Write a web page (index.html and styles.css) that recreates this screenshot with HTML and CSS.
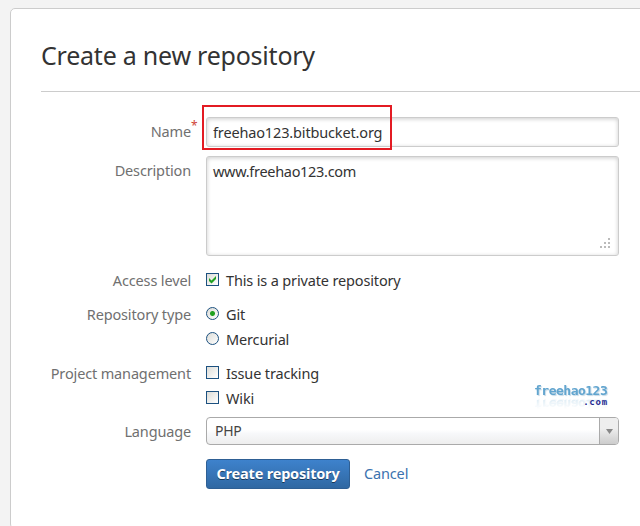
FILE: index.html
```html
<!DOCTYPE html>
<html lang="en">
<head>
<meta charset="utf-8">
<title>Create a new repository</title>
<link rel="stylesheet" href="styles.css">
</head>
<body>
<main class="card">
  <h1 class="title"><span>Create a new repository</span></h1>
  <form class="form">
    <div class="row row-name">
      <label class="label" for="name">Name<span class="required">*</span></label>
      <div class="field name-field"><input class="text-input" id="name" type="text" value="freehao123.bitbucket.org"><span class="highlight"></span></div>
    </div>
    <div class="row row-description">
      <label class="label" for="desc">Description</label>
      <div class="field area-field">
        <textarea class="text-area" id="desc">www.freehao123.com</textarea>
        <svg class="grip" width="10" height="10" viewBox="0 0 10 10" fill="#bbb" shape-rendering="crispEdges"><path d="M8 0h2v2h-2zM4 4h2v2h-2zM8 4h2v2h-2zM0 8h2v2h-2zM4 8h2v2h-2zM8 8h2v2h-2z"/></svg>
      </div>
    </div>
    <div class="row row-options">
      <span class="label">Access level</span>
      <div class="field">
        <label class="option"><input class="box" type="checkbox" checked><span>This is a private repository</span></label>
      </div>
    </div>
    <div class="row row-options">
      <span class="label">Repository type</span>
      <div class="field">
        <label class="option"><input class="box radio" type="radio" name="scm" checked><span>Git</span></label>
        <label class="option"><input class="box radio" type="radio" name="scm"><span>Mercurial</span></label>
      </div>
    </div>
    <div class="row row-options row-project">
      <span class="label">Project management</span>
      <div class="field">
        <label class="option"><input class="box" type="checkbox"><span>Issue tracking</span></label>
        <label class="option"><input class="box" type="checkbox"><span>Wiki</span></label>
      </div>
    </div>
    <div class="row row-language">
      <span class="label">Language</span>
      <div class="select"><span class="select-value">PHP</span><span class="select-arrow"><svg width="7" height="5" viewBox="0 0 7 5"><path d="M0 0h7L3.5 5z" fill="#888"/></svg></span></div>
    </div>
    <div class="actions">
      <button class="submit" type="button">Create repository</button>
      <a class="cancel" href="#">Cancel</a>
    </div>
  </form>
</main>
<div class="watermark"><span class="mark-name">freehao123</span><span class="mark-com">.com</span></div>
</body>
</html>
```

FILE: styles.css
```css
* { box-sizing: border-box; }
body {
  margin: 0;
  width: 640px;
  height: 526px;
  overflow: hidden;
  padding: 8px 0 0 10px;
  background: #f3f3f3;
  color: #333;
  font: 14.5px/20px "Noto Sans", "Open Sans", sans-serif;
  letter-spacing: -0.15px;
}
.card {
  width: 650px;
  height: 521px;
  padding: 0 0 0 30px;
  border: 1px solid #ccc;
  border-radius: 5px;
  background: #fff;
}
.title {
  height: 83px;
  margin: 0;
  padding-top: 28px;
  border-bottom: 1px solid #ccc;
  font-size: 25px;
  line-height: 36px;
  font-weight: 400;
  letter-spacing: -0.23px;
}
.form { width: 578px; padding-top: 25px; }
.row { display: grid; grid-template-columns: 150px 413px; column-gap: 15px; }
.row-name { height: 39px; }
.row-description { height: 114px; }
.label { position: relative; padding-top: 5px; color: #707070; text-align: right; white-space: nowrap; }
.row-name .label, .row-description .label { padding-top: 4px; }
.required { position: absolute; top: -1px; left: 150px; color: #d04437; font-size: 12px; }
.field { position: relative; }
.text-input, .text-area {
  display: block;
  width: 413px;
  height: 30px;
  margin: 0;
  padding: 0 6px;
  border: 1px solid #ccc;
  border-radius: 3px;
  outline: 0;
  background: #fff;
  box-shadow: inset 0 1px 4px #ccc;
  color: #333;
  font: inherit;
  letter-spacing: inherit;
}
.text-area { height: 100px; padding-top: 4px; resize: none; overflow: hidden; letter-spacing: -0.3px; }
.highlight { position: absolute; top: -12px; left: -4px; width: 190px; height: 45px; border: 2px solid #e31b23; }
.grip { position: absolute; right: 9px; bottom: 22px; }
.row-options { padding-bottom: 9px; }
.row-project { padding-bottom: 4px; }
.row-options .label { padding-top: 0; }
.option { display: flex; height: 25px; align-items: flex-start; gap: 7px; }
.box {
  appearance: none;
  width: 13px;
  height: 13px;
  margin: 3px 0 0;
  border: 1px solid #1c5180;
  background: linear-gradient(135deg, #dcdcd7, #fff);
}
.box:checked { background: url("data:image/svg+xml,%3Csvg xmlns='http://www.w3.org/2000/svg' viewBox='0 0 11 11'%3E%3Cpath d='M2 4v3l2.5 2.5L9 5V2L4.5 6.5z' fill='%2321a121'/%3E%3C/svg%3E"), linear-gradient(135deg, #dcdcd7, #fff); }
.radio { border-radius: 50%; }
.radio:checked { background: radial-gradient(circle, #21a121 0 2px, transparent 3px), linear-gradient(135deg, #dcdcd7, #fff); }
.row-language { height: 42px; }
.row-language .label { padding-top: 4px; }
.select {
  display: flex;
  height: 28px;
  border: 1px solid #aaa;
  border-radius: 4px;
  overflow: hidden;
  background: linear-gradient(#fff 45%, #f7f8fa 60%, #eee);
}
.select-value { flex: 1; padding: 3px 8px; color: #444; font-size: 14px; letter-spacing: -0.3px; }
.select-arrow { display: flex; width: 19px; align-items: center; justify-content: center; border-left: 1px solid #aaa; background: linear-gradient(#eee 40%, #ccc); }
.actions { display: flex; align-items: center; gap: 14px; padding-left: 165px; }
.submit {
  width: 144px;
  height: 30px;
  padding: 0 0 2px;
  border: 1px solid #2e5f94;
  border-radius: 3px;
  background: linear-gradient(#3e82cc, #3068a2);
  color: #fff;
  font: bold 14.5px/20px "Noto Sans", "Open Sans", sans-serif;
  letter-spacing: -0.2px;
  text-shadow: 0 1px 0 rgba(0,0,0,.5);
  white-space: nowrap;
}
.cancel { margin-top: -2px; color: #3b73af; text-decoration: none; }
.watermark {
  position: absolute;
  left: 534px;
  top: 383px;
  display: flex;
  flex-direction: column;
  width: 74px;
  font-family: "DejaVu Sans Mono", monospace;
}
.mark-name {
  height: 15px;
  color: #62a5cf;
  font-size: 13px;
  line-height: 15px;
  font-weight: 700;
  letter-spacing: -0.5px;
  text-shadow: 1px 1px 1px #c6d9e6;
  -webkit-box-reflect: below -1px linear-gradient(transparent 20%, rgba(0,0,0,.25));
}
.mark-com { align-self: flex-end; height: 9px; color: #20208c; font-size: 9px; line-height: 9px; font-weight: 700; letter-spacing: 0.8px; }
```
